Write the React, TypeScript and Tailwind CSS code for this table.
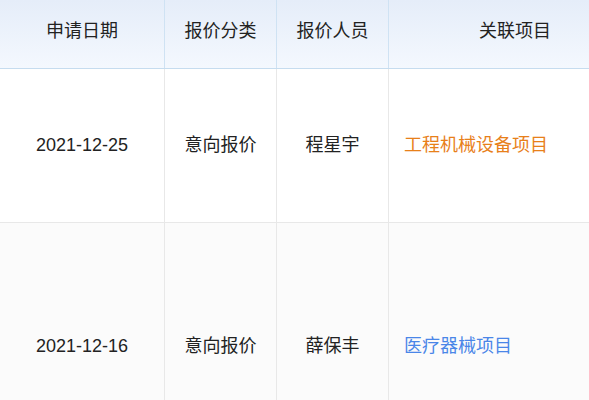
const COLS = ["w-[165px]", "w-[112px]", "w-[112px]"]

const ROWS = [
  { date: "2021-12-25", type: "意向报价", person: "程星宇", project: "工程机械设备项目", color: "text-[#e8801a]", h: "h-[154px]", bg: "bg-white" },
  { date: "2021-12-16", type: "意向报价", person: "薛保丰", project: "医疗器械项目", color: "text-[#4a86e8]", h: "h-[248px]", bg: "bg-[#fbfbfb]" },
]

export default function App() {
  return (
    <div
      className="w-[589px] h-[400px] overflow-hidden bg-white text-[18px] text-[#222]"
      style={{ fontFamily: '"Liberation Sans", Arial, "Noto Sans CJK SC", sans-serif' }}
    >
      <div className="w-[641px]">
        {/* Header */}
        <div className="flex h-[69px] border-b border-[#c6dcef] bg-gradient-to-b from-[#e5edf9] to-[#f4f8fe]">
          <div className={`${COLS[0]} flex items-center justify-center pb-[6px] border-r border-[#cfe2f3]`}>申请日期</div>
          <div className={`${COLS[1]} flex items-center justify-center pb-[6px] border-r border-[#cfe2f3]`}>报价分类</div>
          <div className={`${COLS[2]} flex items-center justify-center pb-[6px] border-r border-[#cfe2f3]`}>报价人员</div>
          <div className="flex-1 flex items-center justify-center pb-[6px]">关联项目</div>
        </div>

        {/* Body */}
        {ROWS.map((row) => (
          <div key={row.date} className={`flex ${row.h} ${row.bg} border-b border-[#e8e8e8]`}>
            <div className={`${COLS[0]} flex items-center justify-center border-r border-[#e8e8e8]`}>{row.date}</div>
            <div className={`${COLS[1]} flex items-center justify-center border-r border-[#e8e8e8]`}>{row.type}</div>
            <div className={`${COLS[2]} flex items-center justify-center border-r border-[#e8e8e8]`}>{row.person}</div>
            <div className={`flex-1 flex items-center pl-[15px] ${row.color}`}>{row.project}</div>
          </div>
        ))}
      </div>
    </div>
  )
}
